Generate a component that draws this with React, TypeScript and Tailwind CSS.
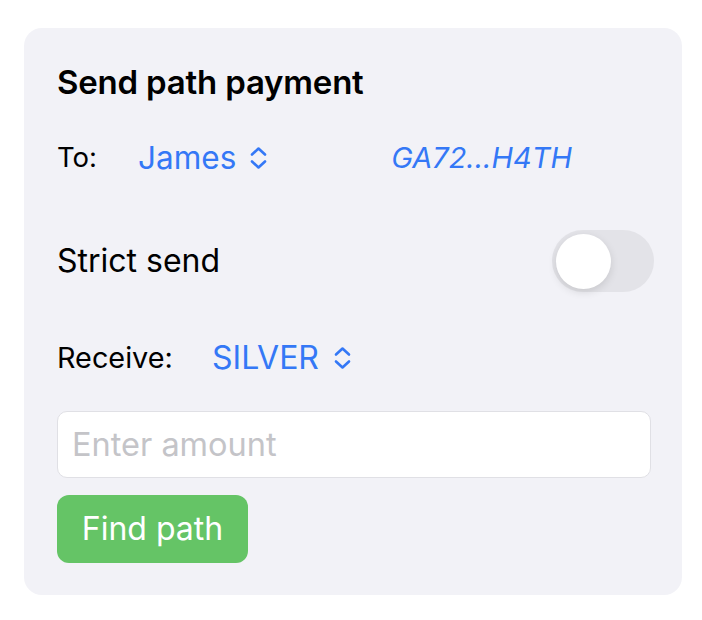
import { useState } from 'react';

function Chevrons() {
  return (
    <svg width="19" height="24" viewBox="0 0 19 24" fill="none" stroke="currentColor" strokeWidth="2.6" strokeLinecap="round" strokeLinejoin="round">
      <path d="M3 8.5 L9.5 2.5 L16 8.5" />
      <path d="M3 15.5 L9.5 21.5 L16 15.5" />
    </svg>
  );
}

export default function App() {
  const [strict, setStrict] = useState(false);
  return (
    <div className="w-[702px] h-[620px] bg-white pt-[28px] pl-[24px]" style={{ fontFamily: 'Inter, "Noto Sans", sans-serif' }}>
      <div className="w-[658px] h-[567px] bg-[#f2f2f7] rounded-[18px] pl-[33px] pr-[28px] pt-[36px]">
        <h1 className="text-[33px] font-semibold text-black leading-[36px] tracking-[-0.2px]">Send path payment</h1>

        {/* To row */}
        <div className="flex items-center mt-[38px] h-[40px]">
          <span className="text-[27.5px] text-black w-[81px]">To:</span>
          <span className="text-[31.5px] text-[#3478f6] flex items-center gap-[13px]">
            James
            <Chevrons />
          </span>
          <span className="text-[29px] italic text-[#3478f6] ml-[123px]">GA72...H4TH</span>
        </div>

        {/* Strict send */}
        <div className="flex items-center justify-between mt-[52px] h-[62px]">
          <span className="text-[32px] text-black">Strict send</span>
          <button
            onClick={() => setStrict(!strict)}
            className={`w-[102px] h-[62px] rounded-full p-[4px] flex items-center ${strict ? 'bg-[#65c466] justify-end' : 'bg-[#e3e3e8] justify-start'}`}
          >
            <span className="w-[55px] h-[55px] rounded-full bg-white shadow-[0_3px_8px_rgba(0,0,0,0.12)]" />
          </button>
        </div>

        {/* Receive row */}
        <div className="flex items-center mt-[46px] h-[40px]">
          <span className="text-[28.8px] text-black w-[155px]">Receive:</span>
          <span className="text-[32px] text-[#3478f6] flex items-center gap-[14px]">
            SILVER
            <Chevrons />
          </span>
        </div>

        {/* Amount input */}
        <input
          placeholder="Enter amount"
          className="mt-[33px] w-[594px] h-[67px] bg-white border border-[#e0e0e5] rounded-[10px] px-[14px] text-[32.5px] text-black placeholder:text-[#c4c4c8] outline-none"
        />

        <button className="mt-[17px] h-[68px] w-[191px] bg-[#65c466] rounded-[12px] text-white text-[32px] flex items-center justify-center">
          Find path
        </button>
      </div>
    </div>
  );
}
